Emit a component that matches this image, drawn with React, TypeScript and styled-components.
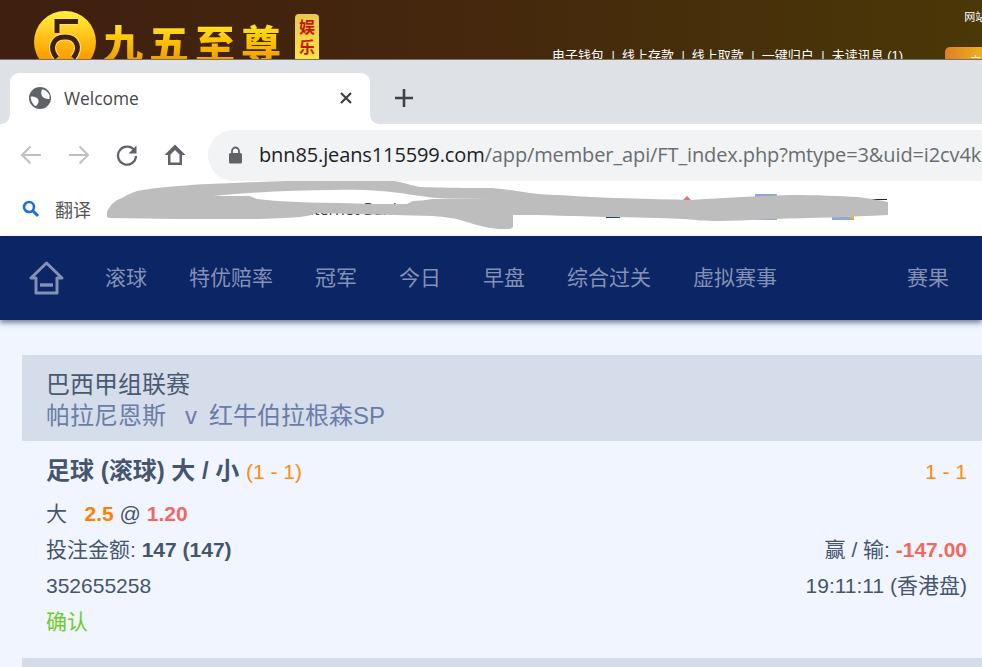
import React from "react";
import styled, { createGlobalStyle } from "styled-components";

const Global = createGlobalStyle`
  html, body { margin: 0; padding: 0; background: #f0f5ff; }
  body { font-family: "Liberation Sans", "Noto Sans CJK SC", sans-serif; }
`;
const Page = styled.div`
  width: 982px; height: 667px; overflow: hidden; display: flex; flex-direction: column; position: relative;
`;
/* site header behind the browser window */
const SiteHeader = styled.header`
  height: 60px; flex: none; overflow: hidden; display: flex; align-items: flex-start;
  padding-left: 34px; box-sizing: border-box;
  background: linear-gradient(90deg, #3f1f10 0%, #45280d 50%, #4a3807 100%);
  position: relative;
  &::after { content: ""; position: absolute; left: 0; right: 0; bottom: 0; height: 1px; background: #77736c; }
`;
const LogoMark = styled.svg`
  width: 62px; height: 62px; flex: none; margin-top: 11px;
`;
const BrandName = styled.div`
  margin: 17px 0 0 7px; width: 184px; font: 900 40px/50px "Noto Sans CJK SC", sans-serif;
  letter-spacing: 6px; white-space: nowrap; flex: none;
  background: linear-gradient(180deg, #fff23c 0%, #ffc400 45%, #e89200 100%);
  -webkit-background-clip: text; background-clip: text; color: transparent;
`;
const BrandBadge = styled.div`
  width: 24px; height: 52px; margin: 14px 0 0 8px; flex: none; border-radius: 4px; box-sizing: border-box; padding-top: 2px;
  background: linear-gradient(180deg, #e9c64e, #ffe93c); color: #c6150c;
  font: 700 16px/20px "Noto Sans CJK SC", sans-serif; text-align: center;
`;
const HeaderLinks = styled.nav`
  margin: 47px 0 0 233px; display: flex; flex: none; color: #fff; font-size: 13px; line-height: 17px; white-space: nowrap;
`;
const HeaderLink = styled.span`
  & + &::before { content: "|"; margin: 0 7px 0 7.5px; color: #e6f0f4; }
`;
const HeaderRight = styled.div`
  display: flex; flex-direction: column; flex: 1; margin-left: 42px; min-width: 0;
`;
const SiteLabel = styled.div`
  color: #fff; font-size: 11px; line-height: 13px; margin: 11px 0 0 19px; height: 13px; white-space: nowrap; overflow: hidden;
`;
const OrangeButton = styled.div`
  height: 30px; margin-top: 23px; border-radius: 5px 0 0 0; overflow: hidden; white-space: nowrap;
  background: linear-gradient(90deg, #dc7f28, #f0b01c); color: #fff; font-size: 11px; line-height: 14px; padding: 7px 0 0 25px; box-sizing: border-box;
`;

/* browser chrome */
const TabStrip = styled.div`
  height: 64px; flex: none; background: #dee1e6; display: flex; align-items: flex-end; padding-left: 10px; box-sizing: border-box;
`;
const Tab = styled.div`
  width: 360px; height: 51px; background: #fff; border-radius: 9px 9px 0 0; display: flex; align-items: center;
  padding: 0 16px 2px 19px; box-sizing: border-box; position: relative;
  &::before, &::after { content: ""; position: absolute; bottom: 0; width: 9px; height: 9px; }
  &::before { left: -9px; background: radial-gradient(circle at 0 0, #dee1e6 8.5px, #fff 9px); }
  &::after { right: -9px; background: radial-gradient(circle at 100% 0, #dee1e6 8.5px, #fff 9px); }
`;
const TabTitle = styled.span`
  margin-left: 13px; flex: 1; font: 17.4px/24px "Open Sans", sans-serif; color: #45474a;
`;
const NewTab = styled.svg`
  width: 20px; height: 20px; margin: 0 0 16px 24px; flex: none;
`;
const Toolbar = styled.div`
  height: 57px; flex: none; background: #fff; display: flex; align-items: flex-start; padding-left: 19px; box-sizing: border-box;
`;
const NavIcon = styled.svg<{ $gap: number }>`
  width: 24px; height: 24px; flex: none; margin-top: 19px; margin-right: ${(p) => p.$gap}px;
`;
const AddressBar = styled.div`
  flex: 1; height: 51px; margin: 6px -40px 0 21px; border-radius: 26px 0 0 26px; background: #f1f3f4; display: flex; align-items: center;
  padding: 0 0 2px 20px; box-sizing: border-box; white-space: nowrap; overflow: hidden; font: 20px/28px "Open Sans", sans-serif; letter-spacing: -0.12px; color: #696d71;
`;
const LockIcon = styled.svg`
  width: 15px; height: 18px; flex: none; margin-right: 16px;
`;
const Host = styled.span`
  color: #202124;
`;
const Bookmarks = styled.div`
  height: 55px; flex: none; background: #fff; display: flex; align-items: center; padding-left: 22px; box-sizing: border-box; position: relative;
  font: 18px/24px "Noto Sans CJK SC", sans-serif; color: #555;
`;
const BookmarkIcon = styled.svg`
  width: 18px; height: 18px; flex: none; margin-right: 15px;
`;
const BookmarkText = styled.span`
  margin-left: 186px; font: 16px/20px "Open Sans", sans-serif; color: #333; white-space: nowrap;
`;
const Scribble = styled.svg`
  position: absolute; left: 0; top: 0; width: 982px; height: 55px; pointer-events: none;
`;

/* sportsbook */
const MainNav = styled.nav`
  height: 84px; flex: none; background: #0b2565; display: flex; align-items: center; padding: 0 33px 4px 29px; box-sizing: border-box;
  box-shadow: 0 3px 5px rgba(30, 40, 70, .55); position: relative; z-index: 1; gap: 42px; font-size: 21px; color: #8391b4;
`;
const HomeIcon = styled.svg`
  width: 35px; height: 34px; flex: none; margin: 4px -1px 0 0;
`;
const NavItem = styled.span<{ $end?: boolean }>`
  line-height: 30px; white-space: nowrap; font-family: "Noto Sans CJK SC", sans-serif; ${(p) => (p.$end ? "margin-left: auto;" : "")}
`;
const Content = styled.main`
  flex: 1; padding: 35px 0 0 22px; background: #f0f5ff; font-size: 21px; color: #45556e;
`;
const MatchHeader = styled.div`
  height: 86px; background: #d5dcea; padding: 15px 0 0 24px; box-sizing: border-box; font-size: 24px; line-height: 30px;
`;
const League = styled.div`
  color: #4a5a72; height: 31px;
`;
const Teams = styled.div`
  color: #6b7da6; white-space: pre;
`;
const Versus = styled.span`
  margin: 0 12px 0 19px;
`;
const Bet = styled.div`
  padding: 13px 15px 0 24px; height: 217px; box-sizing: border-box;
`;
const Row = styled.div`
  display: flex; justify-content: space-between; align-items: baseline; height: 36px; line-height: 35px; white-space: pre;
`;
const TitleRow = styled(Row)`
  height: 42px; line-height: 34px;
`;
const BetTitle = styled.span`
  font-weight: 700; font-size: 24px;
`;
const Score = styled.span`
  color: #ff8c0a; font-size: 21px; font-weight: 400;
`;
const Strong = styled.b<{ $color?: string }>`
  color: ${(p) => p.$color ?? "inherit"};
`;
const Status = styled.span`
  color: #6fcb2a;
`;
const NextHeader = styled.div`
  height: 40px; background: #d5dcea;
`;

export default function App() {
  return (
    <Page>
      <Global />
      <SiteHeader>
        <LogoMark viewBox="0 0 62 62">
          <defs>
            <linearGradient id="coin" x1="0" y1="0" x2="0" y2="1">
              <stop offset="0" stopColor="#fff23a" />
              <stop offset="0.75" stopColor="#ff9d00" />
              <stop offset="1" stopColor="#e88600" />
            </linearGradient>
          </defs>
          <circle cx="31" cy="31" r="31" fill="url(#coin)" />
          <path d="M44 10.5H23V22M23 47C15 38 18 26 31 26C44 26 47 38 39 47" fill="none" stroke="#ffe27a" strokeWidth="7" />
          <path d="M44 10.5H23V22M23 47C15 38 18 26 31 26C44 26 47 38 39 47" fill="none" stroke="#42200f" strokeWidth="5" />
        </LogoMark>
        <BrandName>九五至尊</BrandName>
        <BrandBadge>娱<br />乐</BrandBadge>
        <HeaderLinks>
          <HeaderLink>电子钱包</HeaderLink>
          <HeaderLink>线上存款</HeaderLink>
          <HeaderLink>线上取款</HeaderLink>
          <HeaderLink>一键归户</HeaderLink>
          <HeaderLink>未读讯息 (1)</HeaderLink>
        </HeaderLinks>
        <HeaderRight>
          <SiteLabel>网站</SiteLabel>
          <OrangeButton>立即</OrangeButton>
        </HeaderRight>
      </SiteHeader>

      <TabStrip>
        <Tab>
          <svg width="22" height="22" viewBox="0 0 22 22">
            <circle cx="11" cy="11" r="11" fill="#5f6368" />
            <path d="M13 2.5C16 2.5 19 5 20.5 8L20.5 12C17.5 12.5 14.5 11 13 9C12 7 12 4.5 13 2.5Z" fill="#fff" />
            <path d="M1.5 10C4 9 7 10 9 12C10 14 9.5 16 8 18C7 19 6 19.5 5 18C3 16 2 13 1.5 10Z" fill="#fff" />
          </svg>
          <TabTitle>Welcome</TabTitle>
          <svg width="16" height="16" viewBox="0 0 16 16">
            <path d="M3 3l10 10M13 3L3 13" stroke="#3c4043" strokeWidth="2.2" />
          </svg>
        </Tab>
        <NewTab viewBox="0 0 20 20">
          <path d="M10 1v18M1 10h18" stroke="#3f4346" strokeWidth="2.6" />
        </NewTab>
      </TabStrip>

      <Toolbar>
        <NavIcon $gap={24} viewBox="0 0 24 24">
          <path d="M22 12H3M11.5 3.5L3 12l8.5 8.5" fill="none" stroke="#bdc0c4" strokeWidth="2" />
        </NavIcon>
        <NavIcon $gap={24} viewBox="0 0 24 24">
          <path d="M2 12h19M12.5 3.5L21 12l-8.5 8.5" fill="none" stroke="#bdc0c4" strokeWidth="2" />
        </NavIcon>
        <NavIcon $gap={24} viewBox="0 0 24 24">
          <path d="M20 8.5A9 9 0 1 0 21 13" fill="none" stroke="#5f6368" strokeWidth="2.3" />
          <path d="M21.5 2.5v8h-8z" fill="#5f6368" />
        </NavIcon>
        <NavIcon $gap={0} viewBox="0 0 24 24">
          <path d="M12 1.5L1.5 12H5V22H19V12H22.5zM7.5 11.5L12 7l4.5 4.5V19.5H7.5z" fill="#5f6368" fillRule="evenodd" />
        </NavIcon>
        <AddressBar>
          <LockIcon viewBox="0 0 15 18">
            <path d="M4 7V5a3.5 3.5 0 0 1 7 0v2" fill="none" stroke="#5f6368" strokeWidth="1.8" />
            <rect x="1" y="7" width="13" height="10.5" rx="1.5" fill="#5f6368" />
          </LockIcon>
          <Host>bnn85.jeans115599.com</Host>/app/member_api/FT_index.php?mtype=3&amp;uid=i2cv4kx
        </AddressBar>
      </Toolbar>

      <Bookmarks>
        <BookmarkIcon viewBox="0 0 18 18">
          <circle cx="7" cy="7" r="5" fill="none" stroke="#1a73c9" strokeWidth="2.6" />
          <path d="M10.5 10.5L16 16" stroke="#1a73c9" strokeWidth="3" />
        </BookmarkIcon>
        翻译
        <BookmarkText>88 Internet Bank</BookmarkText>
        <Scribble viewBox="0 181 982 55">
          <path d="M687 196l-5 5h10z" fill="#ef6a6a" />
          <path d="M606 215h14v3h-14z" fill="#2a3f7a" />
          <path d="M755 194h22v3h-22zM755 217h22v3h-22zM832 217h22v3h-22z" fill="#8fa6d8" />
          <path d="M850 216h4v3h-4z" fill="#f5b021" />
          <path d="M866 199h21v1h-21z" fill="#222" />
          <path
            fillRule="evenodd"
            fill="#bdbdbd"
            d="M107 212C110 205 115 200 122 198C128 194 135 191 143 190C170 186 200 184 233 183C280 181 320 180 353 179.5C375 179 390 180 400 182C408 184 414 186 420 187C450 188 480 188 491 188C505 189 515 191 524 192C535 194 548 195 558 195C600 198 650 199 691 200C730 198 760 196 791 195C815 195 840 196 858 197C870 199 880 200 888 202L888 215C850 217 810 218 774 219C755 220 735 221 718 221C705 221 695 220 684 219C660 218 635 217 608 217C575 216 545 215 513 215L513 226C513 228 511 229 508 229C502 229 495 229 490 228C480 226 473 224 467 222C455 218 445 217 433 216C395 215 355 214 317 213C312 215 307 216 300 217C285 218 268 219 250 219C200 219 155 219 110 218C108 218 107 217 107 217Z M213 196C255 192 295 190 333 190C360 189 385 191 400 193C415 195 430 198 445 198.5L490 199C470 199 450 199 433 199C425 200 418 201 413 201C411 202 409 203 407 204C385 204 360 204 340 203C318 203 298 202 277 201C270 200 263 200 257 199C255 198 252 197 250 196Z"
          />
        </Scribble>
      </Bookmarks>

      <MainNav>
        <HomeIcon viewBox="0 0 35 34">
          <path d="M17.5 2L2 17h5v15h21V17h5z" fill="none" stroke="#8391b4" strokeWidth="3" strokeLinejoin="round" />
          <path d="M11 24h13" stroke="#8391b4" strokeWidth="3.4" />
        </HomeIcon>
        <NavItem>滚球</NavItem>
        <NavItem>特优赔率</NavItem>
        <NavItem>冠军</NavItem>
        <NavItem>今日</NavItem>
        <NavItem>早盘</NavItem>
        <NavItem>综合过关</NavItem>
        <NavItem>虚拟赛事</NavItem>
        <NavItem $end>赛果</NavItem>
      </MainNav>

      <Content>
        <MatchHeader>
          <League>巴西甲组联赛</League>
          <Teams>帕拉尼恩斯<Versus>v</Versus>红牛伯拉根森SP</Teams>
        </MatchHeader>
        <Bet>
          <TitleRow>
            <BetTitle>足球 (滚球) 大 / 小 <Score>(1 - 1)</Score></BetTitle>
            <Score>1 - 1</Score>
          </TitleRow>
          <Row>
            <span>大   <Strong $color="#ff8000">2.5</Strong> @ <Strong $color="#f0695f">1.20</Strong></span>
          </Row>
          <Row>
            <span>投注金额: <Strong>147 (147)</Strong></span>
            <span>赢 / 输: <Strong $color="#f0695f">-147.00</Strong></span>
          </Row>
          <Row>
            <span>352655258</span>
            <span>19:11:11 (香港盘)</span>
          </Row>
          <Row>
            <Status>确认</Status>
          </Row>
        </Bet>
        <NextHeader />
      </Content>
    </Page>
  );
}
